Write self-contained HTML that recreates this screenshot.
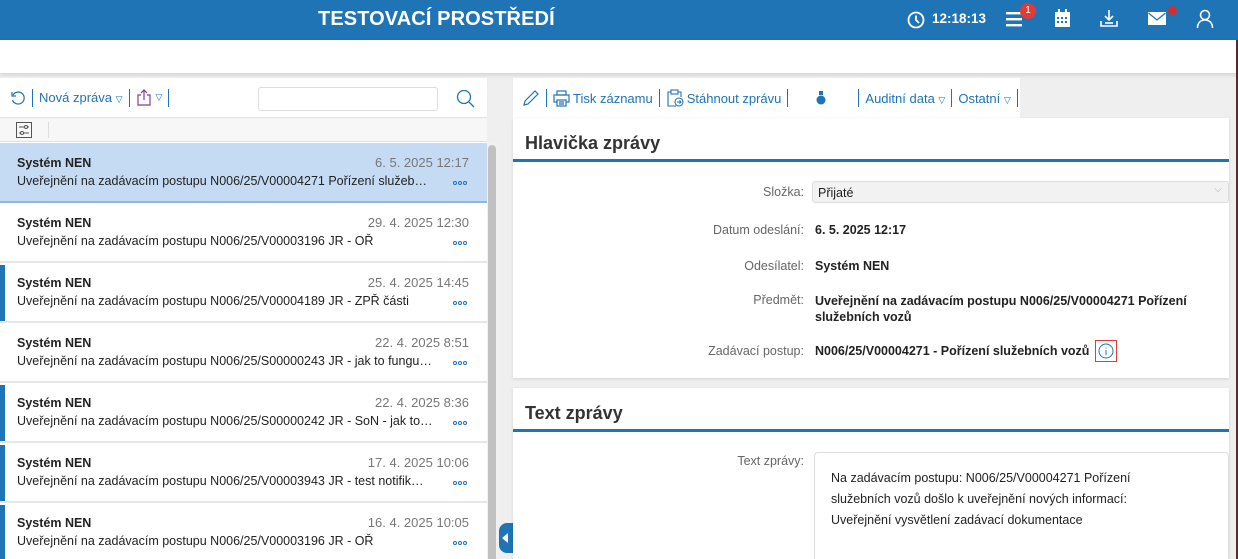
<!DOCTYPE html>
<html><head><meta charset="utf-8"><style>
*{box-sizing:border-box;margin:0;padding:0}
html,body{width:1238px;height:559px;overflow:hidden}
body{background:#efefef;font-family:"Liberation Sans",sans-serif;font-size:13px;color:#222;position:relative}
.abs{position:absolute}
.hdr{left:0;top:0;width:1238px;height:40px;background:#1e74b4}
.title{left:318px;top:8px;color:#fff;font-weight:bold;font-size:20px;letter-spacing:0.1px}
.white{left:0;top:40px;width:1238px;height:33px;background:#fff;box-shadow:0 2px 4px rgba(0,0,0,.12)}
.lp{left:0;top:78px;width:487px;height:481px;background:#fff}
.tb{height:40px;border-bottom:1px solid #e2e2e2;display:flex;align-items:center;white-space:nowrap}
.tb>*{flex-shrink:0}
.sep{width:1px;height:18px;background:#1e74b4;margin:0 6px}
.blue{color:#1e74b4;white-space:nowrap}
.item{position:absolute;left:0;width:487px;height:60px;border-bottom:2px solid #e6e6e6;background:#fff}
.item .n{position:absolute;left:17px;top:13px;font-weight:bold;font-size:12.5px;color:#222}
.item .d{position:absolute;right:18px;top:12px;color:#777;font-size:13px}
.item .s{position:absolute;left:17px;top:31px;font-size:12.5px;color:#222}
.item .m{position:absolute;right:18px;top:38px;width:16px;height:5px}
.item .m i{display:inline-block;width:4px;height:4px;border:1px solid #1e74b4;border-radius:50%;margin-right:1px;vertical-align:top}
.item.bar:before{content:"";position:absolute;left:0;top:2px;bottom:0;width:5px;background:#1e74b4}
.card{background:#fff;box-shadow:0 1px 3px rgba(0,0,0,.12);overflow:hidden}
.h2{font-weight:bold;font-size:18px;color:#333}
.lbl{position:absolute;right:425px;color:#666;text-align:right;font-size:12.5px}
.val{position:absolute;left:302px;font-weight:bold;font-size:12.5px;color:#222}
</style></head><body>
<div class="abs hdr"></div>
<div class="abs title">TESTOVACÍ PROSTŘEDÍ</div>
<svg class="abs" style="left:906px;top:10px" width="20" height="20" viewBox="0 0 20 20"><circle cx="10" cy="10" r="7.5" fill="none" stroke="#fff" stroke-width="1.8"/><path d="M10 5.5V10l3 3" stroke="#fff" stroke-width="1.8" fill="none"/></svg>
<div class="abs" style="left:932px;top:11px;color:#fff;font-size:13.5px;font-weight:bold">12:18:13</div>
<svg class="abs" style="left:1006px;top:11px" width="18" height="16"><rect y="1" width="16" height="2.4" fill="#fff"/><rect y="7" width="16" height="2.4" fill="#fff"/><rect y="13" width="16" height="2.4" fill="#fff"/></svg>
<div class="abs" style="left:1020px;top:3px;width:16px;height:16px;border-radius:8px;background:#e53935;color:#fff;font-size:10px;text-align:center;line-height:16px">1</div>
<svg class="abs" style="left:1054px;top:9px" width="17" height="19"><rect x="1" y="3" width="15" height="15" fill="#fff"/><rect x="4" y="0" width="2" height="4" fill="#fff"/><rect x="11" y="0" width="2" height="4" fill="#fff"/><g fill="#1e74b4"><rect x="3" y="8" width="2" height="2"/><rect x="7" y="8" width="2" height="2"/><rect x="11" y="8" width="2" height="2"/><rect x="3" y="12" width="2" height="2"/><rect x="7" y="12" width="2" height="2"/><rect x="11" y="12" width="2" height="2"/></g></svg>
<svg class="abs" style="left:1100px;top:9px" width="18" height="19" fill="none" stroke="#fff" stroke-width="1.6"><path d="M9 1v10M5 7l4 4 4-4M1 12v5h16v-5"/><path d="M5 14h8"/></svg>
<svg class="abs" style="left:1148px;top:12px" width="19" height="14"><rect x="0" y="0" width="18" height="13" fill="#fff"/><path d="M0.5 1l8.5 7 8.5-7" stroke="#1e74b4" fill="none" stroke-width="1.2"/></svg>
<div class="abs" style="left:1168px;top:6px;width:9px;height:9px;border-radius:5px;background:#d32f2f"></div>
<svg class="abs" style="left:1196px;top:9px" width="18" height="20" fill="none" stroke="#fff" stroke-width="1.6"><circle cx="9" cy="6" r="4.5"/><path d="M1.5 19c0-5 3-8 7.5-8s7.5 3 7.5 8"/></svg>
<div class="abs white"></div>

<div class="abs lp">
 <div class="tb" style="padding-left:10px;position:relative">
  <svg width="16" height="16" fill="none" stroke="#1e74b4" stroke-width="1.2"><path d="M3 5A6 6 0 1 1 2.5 10"/><path d="M2 2v4h4"/></svg>
  <span class="sep"></span><span class="blue">Nová zpráva <span style="font-size:9px">▽</span></span>
  <span class="sep"></span>
  <svg width="16" height="17" fill="none" stroke="#7b3fa0" stroke-width="1.2"><path d="M5 6H2v10h12V6h-3M8 11V1M5 4l3-3 3 3"/></svg>
  <span class="blue" style="font-size:9px;margin-left:4px">▽</span><span class="sep"></span>
  <div style="position:absolute;left:258px;top:9px;width:180px;height:24px;border:1px solid #ddd;border-radius:3px"></div>
  <svg style="position:absolute;left:456px;top:11px" width="20" height="20" fill="none" stroke="#1e74b4" stroke-width="1.3"><circle cx="8" cy="8" r="6.5"/><path d="M13 13l5 5"/></svg>
 </div>
 <div style="height:24px;background:#f7f7f7;border-bottom:1px solid #e0e0e0;position:relative">
  <svg style="position:absolute;left:16px;top:4px" width="16" height="16" fill="none" stroke="#555" stroke-width="1"><rect x="0.5" y="0.5" width="15" height="15"/><path d="M3 5h10M3 11h10"/><circle cx="10" cy="5" r="1.5" fill="#fff"/><circle cx="6" cy="11" r="1.5" fill="#fff"/></svg>
  <div style="position:absolute;left:48px;top:4px;width:1px;height:16px;background:#ddd"></div>
 </div>
</div>
<div class="item" style="top:143px;background:#c5dbf4;border-bottom-color:#8bb6e6"><div class="n">Systém NEN</div><div class="d">6. 5. 2025 12:17</div><div class="s">Uveřejnění na zadávacím postupu N006/25/V00004271 Pořízení služeb…</div><div class="m"><i></i><i></i><i></i></div></div>
<div class="item" style="top:203px"><div class="n">Systém NEN</div><div class="d">29. 4. 2025 12:30</div><div class="s">Uveřejnění na zadávacím postupu N006/25/V00003196 JR - OŘ</div><div class="m"><i></i><i></i><i></i></div></div>
<div class="item bar" style="top:263px"><div class="n">Systém NEN</div><div class="d">25. 4. 2025 14:45</div><div class="s">Uveřejnění na zadávacím postupu N006/25/V00004189 JR - ZPŘ části</div><div class="m"><i></i><i></i><i></i></div></div>
<div class="item" style="top:323px"><div class="n">Systém NEN</div><div class="d">22. 4. 2025 8:51</div><div class="s">Uveřejnění na zadávacím postupu N006/25/S00000243 JR - jak to fungu…</div><div class="m"><i></i><i></i><i></i></div></div>
<div class="item bar" style="top:383px"><div class="n">Systém NEN</div><div class="d">22. 4. 2025 8:36</div><div class="s">Uveřejnění na zadávacím postupu N006/25/S00000242 JR - SoN - jak to…</div><div class="m"><i></i><i></i><i></i></div></div>
<div class="item bar" style="top:443px"><div class="n">Systém NEN</div><div class="d">17. 4. 2025 10:06</div><div class="s">Uveřejnění na zadávacím postupu N006/25/V00003943 JR - test notifik…</div><div class="m"><i></i><i></i><i></i></div></div>
<div class="item bar" style="top:503px"><div class="n">Systém NEN</div><div class="d">16. 4. 2025 10:05</div><div class="s">Uveřejnění na zadávacím postupu N006/25/V00003196 JR - OŘ</div><div class="m"><i></i><i></i><i></i></div></div>
<div class="abs" style="left:487px;top:143px;width:11px;height:416px;background:#f1f1f1"></div>
<div class="abs" style="left:488px;top:145px;width:8px;height:414px;background:#c1c1c1;border-radius:4px 4px 0 0"></div>
<div class="abs" style="left:499px;top:523px;width:14px;height:30px;background:#1e74b4;border-radius:8px 0 0 8px"></div>
<svg class="abs" style="left:501px;top:533px" width="8" height="10"><path d="M7 0v10L1 5z" fill="#fff"/></svg>

<div class="abs tb" style="left:513px;top:78px;width:507px;height:40px;background:#fff;padding-left:9px;border:none">
 <svg width="18" height="18" fill="none" stroke="#1e74b4" stroke-width="1.2"><path d="M2 16l1-4L13 2l3 3L6 15z"/></svg>
 <span class="sep"></span>
 <svg width="17" height="17" fill="none" stroke="#1e74b4" stroke-width="1.2"><rect x="4" y="1" width="9" height="4"/><rect x="1" y="5" width="15" height="7"/><rect x="4" y="10" width="9" height="6" fill="#fff"/><path d="M6 12h5M6 14h5"/></svg>
 <span class="blue" style="margin-left:3px">Tisk záznamu</span><span class="sep"></span>
 <svg width="18" height="18" fill="none" stroke="#1e74b4" stroke-width="1.1"><path d="M5 3H2v14h8M12 3h3v5"/><rect x="5" y="1" width="7" height="4"/><circle cx="13" cy="13" r="4"/><path d="M11 13h4M13.5 11.5L15 13l-1.5 1.5"/></svg>
 <span class="blue" style="margin-left:3px">Stáhnout zprávu</span><span class="sep"></span>
 <span style="width:54px;display:inline-flex;justify-content:center"><svg width="10" height="14"><rect x="3" y="0" width="4" height="4" fill="#1e74b4"/><circle cx="5" cy="9" r="4.5" fill="#1e74b4"/></svg></span>
 <span class="sep" style="margin-left:10px"></span>
 <span class="blue">Auditní data <span style="font-size:9px">▽</span></span><span class="sep"></span>
 <span class="blue">Ostatní <span style="font-size:9px">▽</span></span><span class="sep"></span>
</div>

<div class="abs card" style="left:513px;top:118px;width:716px;height:260px">
 <div class="h2" style="position:absolute;left:12px;top:15px">Hlavička zprávy</div>
 <div style="position:absolute;left:0;top:41px;width:716px;height:3px;background:#1e74b4"></div>
 <div class="lbl" style="top:67px">Složka:</div>
 <div style="position:absolute;left:299px;top:63px;width:417px;height:22px;background:#f2f2f2;border:1px solid #ddd;border-radius:3px;padding:4px 5px;font-size:12.5px">Přijaté<span style="position:absolute;right:6px;top:2px;color:#aaa;font-size:10px">⌵</span></div>
 <div class="lbl" style="top:105px">Datum odeslání:</div><div class="val" style="top:105px">6. 5. 2025 12:17</div>
 <div class="lbl" style="top:141px">Odesílatel:</div><div class="val" style="top:141px">Systém NEN</div>
 <div class="lbl" style="top:175px">Předmět:</div><div class="val" style="top:175px;line-height:16px">Uveřejnění na zadávacím postupu N006/25/V00004271 Pořízení<br>služebních vozů</div>
 <div class="lbl" style="top:226px">Zadávací postup:</div><div class="val" style="top:226px">N006/25/V00004271 - Pořízení služebních vozů</div>
 <div style="position:absolute;left:582px;top:222px;width:22px;height:22px;border:1px solid #e53935"></div>
 <svg style="position:absolute;left:585px;top:225px" width="16" height="16" fill="none" stroke="#1e74b4" stroke-width="1"><circle cx="8" cy="8" r="7"/><path d="M8 7v5M8 4.5v1"/></svg>
</div>

<div class="abs card" style="left:513px;top:388px;width:716px;height:171px">
 <div class="h2" style="position:absolute;left:12px;top:15px">Text zprávy</div>
 <div style="position:absolute;left:0;top:41px;width:716px;height:3px;background:#1e74b4"></div>
 <div class="lbl" style="top:66px">Text zprávy:</div>
 <div style="position:absolute;left:301px;top:64px;width:415px;height:120px;border:1px solid #ddd;border-radius:4px;padding:15px 16px;line-height:21px;font-size:12.5px">Na zadávacím postupu: N006/25/V00004271 Pořízení<br>služebních vozů došlo k uveřejnění nových informací:<br>Uveřejnění vysvětlení zadávací dokumentace</div>
</div>
<div class="abs" style="left:1236px;top:40px;width:2px;height:519px;background:#5a2a2a"></div>
</body></html>
